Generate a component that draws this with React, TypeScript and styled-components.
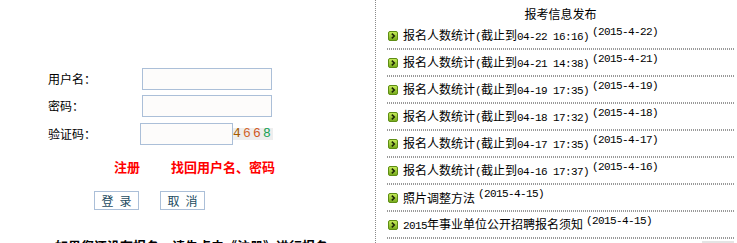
import React from "react";
import styled, { createGlobalStyle } from "styled-components";

const Global = createGlobalStyle`
  html, body { margin: 0; padding: 0; background: #fff; overflow: hidden; }
  body {
    font-family: "Noto Sans CJK SC", "Liberation Sans", sans-serif;
    font-size: 12px;
    color: #000;
  }
`;

const Page = styled.div`
  display: flex;
  width: 737px;
  height: 243px;
  overflow: hidden;
`;

const LeftPanel = styled.div`
  width: 375px;
  flex: none;
  display: flex;
  flex-direction: column;
  padding-top: 68px;
  box-sizing: border-box;
`;

const FormRow = styled.div<{ $gap?: number }>`
  display: flex;
  flex: none;
  align-items: center;
  height: 22px;
  padding-left: 48px;
  margin-top: ${(p) => p.$gap ?? 0}px;
`;

const Label = styled.span<{ $w: number }>`
  width: ${(p) => p.$w}px;
  flex: none;
  font-size: 12px;
  line-height: 14px;
`;

const Input = styled.input<{ $w: number }>`
  width: ${(p) => p.$w}px;
  height: 22px;
  box-sizing: border-box;
  border: 1px solid #abbfd8;
  background: #fdfcfb;
  margin: 0;
  padding: 0 3px;
  outline: none;
`;

const Captcha = styled.span`
  display: inline-flex;
  align-items: center;
  height: 12px;
  width: 40px;
  background: #eeeeee;
  font-family: "Liberation Mono", monospace;
  font-size: 13px;
  letter-spacing: 2.2px;
  line-height: 12px;
`;

const Digit = styled.span<{ $c: string }>`
  color: ${(p) => p.$c};
`;

const Links = styled.div`
  display: flex;
  flex: none;
  gap: 31px;
  padding-left: 114px;
  margin-top: 14px;
  line-height: 16px;
`;

const RedLink = styled.a`
  color: #ff0000;
  font-weight: bold;
  font-size: 13px;
  text-decoration: none;
  cursor: pointer;
`;

const Buttons = styled.div`
  display: flex;
  flex: none;
  gap: 21px;
  padding-left: 94px;
  margin-top: 16px;
`;

const Button = styled.button`
  width: 45px;
  height: 19px;
  box-sizing: border-box;
  border: 1px solid #abbfd8;
  background: #fff;
  color: #1c4b60;
  font-family: "Noto Sans CJK SC", sans-serif;
  font-size: 12px;
  line-height: 15px;
  padding: 0;
  margin: 0;
  cursor: pointer;
`;

const Notice = styled.div`
  flex: none;
  margin-top: 28px;
  padding-left: 55px;
  font-weight: bold;
  font-size: 13px;
  line-height: 16px;
  white-space: nowrap;
`;

const RightPanel = styled.div`
  flex: 1;
  display: flex;
  flex-direction: column;
  padding: 0 3px 0 12px;
  background: linear-gradient(to bottom, #8a8a8a 50%, transparent 50%) left top / 1px 2px repeat-y;
`;

const Title = styled.div`
  flex: none;
  height: 23px;
  box-sizing: border-box;
  padding-top: 6px;
  line-height: 16px;
  text-align: center;
  font-size: 12px;
`;

const Row = styled.div`
  flex: none;
  height: 27px;
  box-sizing: border-box;
  padding-bottom: 2px;
  display: flex;
  align-items: center;
  white-space: nowrap;
  background: repeating-linear-gradient(to right, #999 0 1px, transparent 1px 2px) left bottom / 100% 2px no-repeat;
`;

const Bullet = styled.svg`
  flex: none;
  margin: 1px 5px 0 1px;
`;

const ItemText = styled.span`
  font-size: 12px;
  line-height: 14px;
  color: #000;
`;

const Lat = styled.span`
  font-family: "Liberation Mono", monospace;
  font-size: 11px;
  letter-spacing: -0.6px;
`;

const Sup = styled.span`
  font-family: "Liberation Mono", monospace;
  font-size: 11px;
  letter-spacing: -0.6px;
  position: relative;
  top: -4px;
  margin-left: 3px;
`;

const More = styled.div`
  flex: none;
  align-self: flex-end;
  width: 32px;
  height: 20px;
  margin-top: 2px;
  background: #e4e4e4;
`;

const Icon = () => (
  <Bullet width="10" height="10" viewBox="0 0 10 10">
    <defs>
      <linearGradient id="bg" x1="0" y1="0" x2="0" y2="1">
        <stop offset="0" stopColor="#c9ee5c" />
        <stop offset="1" stopColor="#74a81b" />
      </linearGradient>
    </defs>
    <rect x="0.5" y="0.5" width="9" height="9" rx="1.5" fill="url(#bg)" stroke="#5e8d14" />
    <path d="M3.8 2.6 L6.3 5 L3.8 7.4" fill="none" stroke="#1b2405" strokeWidth="1.5" />
  </Bullet>
);

type Item = { cn: string; lat?: string; date: string; pre?: string };

const items: Item[] = [
  { cn: "报名人数统计", lat: "04-22 16:16)", date: "(2015-4-22)" },
  { cn: "报名人数统计", lat: "04-21 14:38)", date: "(2015-4-21)" },
  { cn: "报名人数统计", lat: "04-19 17:35)", date: "(2015-4-19)" },
  { cn: "报名人数统计", lat: "04-18 17:32)", date: "(2015-4-18)" },
  { cn: "报名人数统计", lat: "04-17 17:35)", date: "(2015-4-17)" },
  { cn: "报名人数统计", lat: "04-16 17:37)", date: "(2015-4-16)" },
  { cn: "照片调整方法", date: "(2015-4-15)" },
  { cn: "年事业单位公开招聘报名须知", pre: "2015", date: "(2015-4-15)" },
];

export default function App() {
  return (
    <>
      <Global />
      <Page>
        <LeftPanel>
          <FormRow>
            <Label $w={94}>用户名：</Label>
            <Input $w={130} />
          </FormRow>
          <FormRow $gap={5}>
            <Label $w={94}>密码：</Label>
            <Input $w={130} type="password" />
          </FormRow>
          <FormRow $gap={6}>
            <Label $w={92}>验证码：</Label>
            <Input $w={93} />
            <Captcha>
              <Digit $c="#a55a00">4</Digit>
              <Digit $c="#d2642a">6</Digit>
              <Digit $c="#d0571c">6</Digit>
              <Digit $c="#14a052">8</Digit>
            </Captcha>
          </FormRow>
          <Links>
            <RedLink>注册</RedLink>
            <RedLink>找回用户名、密码</RedLink>
          </Links>
          <Buttons>
            <Button>登&ensp;录</Button>
            <Button>取&ensp;消</Button>
          </Buttons>
          <Notice>如果您还没有报名，请先点击《注册》进行报名</Notice>
        </LeftPanel>
        <RightPanel>
          <Title>报考信息发布</Title>
          {items.map((it, i) => (
            <Row key={i}>
              <Icon />
              <ItemText>
                {it.pre && <Lat>{it.pre}</Lat>}
                {it.cn}
                {it.lat && (
                  <>
                    <Lat>(</Lat>截止到<Lat>{it.lat}</Lat>
                  </>
                )}
              </ItemText>
              <Sup>{it.date}</Sup>
            </Row>
          ))}
          <More />
        </RightPanel>
      </Page>
    </>
  );
}
